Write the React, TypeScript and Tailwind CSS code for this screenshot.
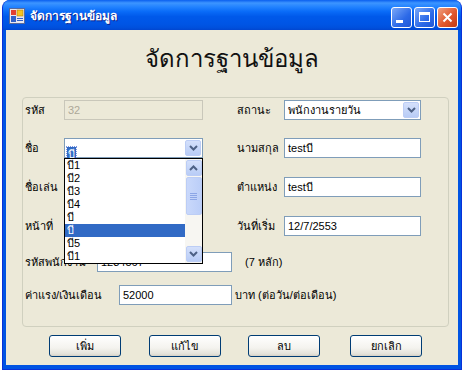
import React from "react";

const FONT = "font-['Tahoma','Liberation_Sans','Noto_Sans',sans-serif]";

function Chevron({ up = false, color = "#4D6185" }: { up?: boolean; color?: string }) {
  return (
    <svg width="9" height="6" viewBox="0 0 9 6">
      {up ? (
        <polyline points="1,5 4.5,1.5 8,5" fill="none" stroke={color} strokeWidth="2" />
      ) : (
        <polyline points="1,1 4.5,4.5 8,1" fill="none" stroke={color} strokeWidth="2" />
      )}
    </svg>
  );
}

function DropBtn() {
  return (
    <div className="w-[16px] h-[16px] mt-[1px] mr-[1px] rounded-[2px] border border-[#BCCDF5] bg-[linear-gradient(to_bottom,#D4E0FB,#B8CCF6)] flex items-center justify-center">
      <Chevron />
    </div>
  );
}

function Label({ children, w }: { children: React.ReactNode; w: string }) {
  return <div className={`${w} shrink-0 h-[20px] text-[11px] leading-[20px] text-black whitespace-nowrap`}>{children}</div>;
}

function Input({ value, w }: { value: string; w: string }) {
  return (
    <div className={`${w} shrink-0 h-[20px] border border-[#7F9DB9] bg-white pl-[3px] text-[11px] leading-[18px] text-black whitespace-nowrap overflow-hidden`}>
      {value}
    </div>
  );
}

function XPButton({ children }: { children: React.ReactNode }) {
  return (
    <div className="w-[72px] h-[22px] rounded-[3px] border border-[#003C74] bg-[linear-gradient(to_bottom,#FFFFFF_0%,#F4F3EE_60%,#E3E2DA_90%,#D6D0C5_100%)] flex items-center justify-center text-[11px] text-black">
      {children}
    </div>
  );
}

export default function App() {
  const items = ["บี1", "บี2", "บี3", "บี4", "บี", "บี", "บี5", "บี1"];
  return (
    <div className={`w-[464px] h-[373px] bg-white overflow-hidden ${FONT}`}>
      <div className="ml-[2px] w-[460px] h-[370px] flex flex-col rounded-t-[8px] bg-[#0054E3] border-x border-b border-[#0831D9] overflow-hidden">
        {/* title bar */}
        <div className="h-[30px] shrink-0 flex items-center bg-[linear-gradient(to_bottom,#0A5FEF_0%,#3D95FF_10%,#2484FF_22%,#0A6CF8_38%,#0059EA_55%,#0055E5_80%,#0050DD_92%,#0146D0_100%)]">
          <svg width="16" height="16" viewBox="0 0 16 16" className="ml-[6px] mt-[1px]">
            <rect x="0.5" y="0.5" width="15" height="15" fill="#E8E8F0" stroke="#5A6A9A" />
            <rect x="2" y="2" width="5" height="5" fill="#E04030" />
            <rect x="8" y="2" width="6" height="6" fill="#F6C320" stroke="#B08000" strokeWidth="0.6" />
            <rect x="2" y="8" width="5" height="6" fill="#3060C8" />
            <rect x="8" y="10" width="6" height="1" fill="#3060C8" />
            <rect x="8" y="12" width="6" height="1" fill="#3060C8" />
          </svg>
          <div className="ml-[5px] mt-[1px] text-white font-bold text-[12px] [text-shadow:1px_1px_0_#0A1E8C]">จัดการฐานข้อมูล</div>
          <div className="ml-auto mr-[3px] mt-[4px] flex gap-[2px]">
            <div className="w-[21px] h-[21px] rounded-[3px] border border-white bg-[linear-gradient(135deg,#7AA8F8,#2C6AE8_60%,#1F57D6)] relative">
              <div className="absolute left-[4px] bottom-[4px] w-[7px] h-[3px] bg-white" />
            </div>
            <div className="w-[21px] h-[21px] rounded-[3px] border border-white bg-[linear-gradient(135deg,#7AA8F8,#2C6AE8_60%,#1F57D6)] flex items-center justify-center">
              <div className="w-[11px] h-[10px] border border-white border-t-[3px]" />
            </div>
            <div className="w-[21px] h-[21px] rounded-[3px] border border-white bg-[linear-gradient(135deg,#F0A080,#E0582E_55%,#C23A12)] flex items-center justify-center">
              <svg width="11" height="11" viewBox="0 0 11 11">
                <path d="M1.5 1.5 L9.5 9.5 M9.5 1.5 L1.5 9.5" stroke="white" strokeWidth="2" />
              </svg>
            </div>
          </div>
        </div>
        {/* client */}
        <div className="mx-[3px] flex-1 bg-[#ECE9D8] flex flex-col">
          <div className="h-[67px] shrink-0 flex justify-center pt-[14px]">
            <div className="text-[24px] leading-[30px] font-light text-[#111]">จัดการฐานข้อมูล</div>
          </div>
          <div className="ml-[16px] w-[427px] h-[230px] shrink-0 rounded-[4px] border border-[#D0D0BF] flex flex-col pt-[2px] pl-[2px]">
            {/* row 1 */}
            <div className="flex items-start">
              <Label w="w-[39px]">รหัส</Label>
              <div className="w-[139px] shrink-0 h-[20px] border border-[#C9C7BA] bg-[#ECE9D8] pl-[3px] text-[11px] leading-[18px] text-[#ACA899]">32</div>
              <div className="w-[34px] shrink-0" />
              <Label w="w-[47px]">สถานะ</Label>
              <div className="w-[137px] shrink-0 h-[20px] border border-[#7F9DB9] bg-white flex">
                <div className="flex-1 pl-[3px] text-[11px] leading-[18px] whitespace-nowrap">พนักงานรายวัน</div>
                <DropBtn />
              </div>
            </div>
            {/* row 2 */}
            <div className="flex items-start mt-[18px]">
              <Label w="w-[39px]">ชื่อ</Label>
              <div className="w-[139px] shrink-0 h-[20px] border border-[#7F9DB9] bg-white flex relative">
                <div className="flex-1 pl-[2px] pt-[2px]">
                  <span className="inline-block bg-[#316AC5] text-white text-[11px] leading-[14px] px-[1px] outline-1 outline-dotted outline-[#7A96DF]">บี</span>
                </div>
                <DropBtn />
                {/* dropdown list overlay */}
                <div className="absolute left-[-1px] top-[19px] w-[139px] h-[106px] border border-black bg-white flex z-10">
                  <div className="flex-1 flex flex-col">
                    {items.map((it, i) => (
                      <div
                        key={i}
                        className={`h-[13px] pl-[2px] text-[11px] leading-[13px] ${i === 5 ? "bg-[#316AC5] text-white" : "text-black"}`}
                      >
                        {it}
                      </div>
                    ))}
                  </div>
                  <div className="w-[17px] shrink-0 bg-[#F7F6F2] flex flex-col items-center pt-[1px] pb-[1px]">
                    <div className="w-[16px] h-[16px] rounded-[2px] border border-[#BCCDF5] bg-[linear-gradient(to_bottom,#D4E0FB,#B8CCF6)] flex items-center justify-center">
                      <Chevron up />
                    </div>
                    <div className="mt-[1px] w-[16px] h-[38px] rounded-[2px] border border-[#BCCDF5] bg-[linear-gradient(to_right,#C9D8FB,#BBCEF8)] flex flex-col items-center justify-center gap-[1px]">
                      <div className="w-[7px] h-[1px] bg-[#8CA6E6]" />
                      <div className="w-[7px] h-[1px] bg-[#8CA6E6]" />
                      <div className="w-[7px] h-[1px] bg-[#8CA6E6]" />
                      <div className="w-[7px] h-[1px] bg-[#8CA6E6]" />
                    </div>
                    <div className="mt-auto w-[16px] h-[16px] rounded-[2px] border border-[#BCCDF5] bg-[linear-gradient(to_bottom,#D4E0FB,#B8CCF6)] flex items-center justify-center">
                      <Chevron />
                    </div>
                  </div>
                </div>
              </div>
              <div className="w-[34px] shrink-0" />
              <Label w="w-[47px]">นามสกุล</Label>
              <Input w="w-[137px]" value="testบี" />
            </div>
            {/* row 3 */}
            <div className="flex items-start mt-[19px]">
              <Label w="w-[39px]">ชื่อเล่น</Label>
              <div className="w-[139px] shrink-0 h-[20px]" />
              <div className="w-[34px] shrink-0" />
              <Label w="w-[47px]">ตำแหน่ง</Label>
              <Input w="w-[137px]" value="testบี" />
            </div>
            {/* row 4 */}
            <div className="flex items-start mt-[19px]">
              <Label w="w-[39px]">หน้าที่</Label>
              <div className="w-[139px] shrink-0 h-[20px]" />
              <div className="w-[34px] shrink-0" />
              <Label w="w-[47px]">วันที่เริ่ม</Label>
              <Input w="w-[137px]" value="12/7/2553" />
            </div>
            {/* row 5 */}
            <div className="flex items-start mt-[16px]">
              <Label w="w-[72px]">รหัสพนักงาน</Label>
              <Input w="w-[135px]" value="1234567" />
              <div className="ml-[13px] text-[11px] leading-[20px]">(7 หลัก)</div>
            </div>
            {/* row 6 */}
            <div className="flex items-start mt-[13px]">
              <Label w="w-[94px]">ค่าแรง/เงินเดือน</Label>
              <Input w="w-[113px]" value="52000" />
              <div className="ml-[3px] text-[11px] leading-[20px]">บาท (ต่อวัน/ต่อเดือน)</div>
            </div>
          </div>
          {/* buttons */}
          <div className="flex mt-[8px] pl-[43px]">
            <XPButton>เพิ่ม</XPButton>
            <div className="w-[28px] shrink-0" />
            <XPButton>แก้ไข</XPButton>
            <div className="w-[27px] shrink-0" />
            <XPButton>ลบ</XPButton>
            <div className="w-[30px] shrink-0" />
            <XPButton>ยกเลิก</XPButton>
          </div>
        </div>
        <div className="h-[4px] shrink-0" />
      </div>
    </div>
  );
}
